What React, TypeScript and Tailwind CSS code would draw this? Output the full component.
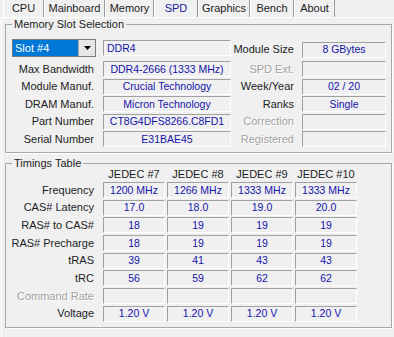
const tabs = [
  { name: 'CPU', w: 'w-[41px]' },
  { name: 'Mainboard', w: 'w-[61px]' },
  { name: 'Memory', w: 'w-[49px]' },
  { name: 'SPD', w: 'w-[44px]', active: true },
  { name: 'Graphics', w: 'w-[52px]' },
  { name: 'Bench', w: 'w-[44px]' },
  { name: 'About', w: 'w-[41px]' },
]

const slotRows = [
  { label: 'Max Bandwidth', value: 'DDR4-2666 (1333 MHz)', label2: 'SPD Ext.', value2: '', off: true },
  { label: 'Module Manuf.', value: 'Crucial Technology', label2: 'Week/Year', value2: '02 / 20' },
  { label: 'DRAM Manuf.', value: 'Micron Technology', label2: 'Ranks', value2: 'Single' },
  { label: 'Part Number', value: 'CT8G4DFS8266.C8FD1', label2: 'Correction', value2: '', off: true },
  { label: 'Serial Number', value: 'E31BAE45', label2: 'Registered', value2: '', off: true },
]

const timings = [
  { label: 'Frequency', vals: ['1200 MHz', '1266 MHz', '1333 MHz', '1333 MHz'] },
  { label: 'CAS# Latency', vals: ['17.0', '18.0', '19.0', '20.0'] },
  { label: 'RAS# to CAS#', vals: ['18', '19', '19', '19'] },
  { label: 'RAS# Precharge', vals: ['18', '19', '19', '19'] },
  { label: 'tRAS', vals: ['39', '41', '43', '43'] },
  { label: 'tRC', vals: ['56', '59', '62', '62'] },
  { label: 'Command Rate', vals: ['', '', '', ''], off: true },
  { label: 'Voltage', vals: ['1.20 V', '1.20 V', '1.20 V', '1.20 V'] },
]

function Field({ children, className }: { children?: React.ReactNode; className: string }) {
  return (
    <div className={`h-[16px] border border-t-[#a0a0a0] border-l-[#a0a0a0] border-r-white border-b-white flex items-center justify-center text-[10.5px] text-[#1414a8] whitespace-nowrap overflow-hidden ${className}`}>
      {children}
    </div>
  )
}

function Label({ text, off, className }: { text: string; off?: boolean; className: string }) {
  return (
    <div className={`text-right whitespace-nowrap ${off ? 'text-[#a2a2a2] [text-shadow:1px_1px_0_#fff]' : 'text-[#1c1c24]'} ${className}`}>
      {text}
    </div>
  )
}

export default function App() {
  return (
    <div className="w-[394px] h-[337px] bg-[#f0f0f0] overflow-hidden font-['Liberation_Sans',Arial,sans-serif] text-[11px] leading-[13px] pl-[1px]">
      {/* tab strip */}
      <div className="flex h-[17px] pl-[2px]">
        {tabs.map((t) => (
          <div
            key={t.name}
            className={`${t.w} h-full flex items-center justify-center border-l border-l-white ${
              t.active ? 'text-[#1a1a9a] border-r border-r-[#8a8a8a]' : 'text-[#1c1c24] border-r border-r-[#9a9a9a]'
            }`}
          >
            {t.name}
          </div>
        ))}
      </div>

      {/* tab page */}
      <div className="h-[320px] border-l border-t border-white pl-[3px]">
        <fieldset className="w-[387px] border border-[#a8a8a8] shadow-[1px_1px_0_#fff] pb-[5px]">
          <legend className="ml-[6px] px-[2px] leading-[13px] text-[#1c1c24]">Memory Slot Selection</legend>
          <div className="flex items-center pt-[8px] h-[18px] box-content">
            <div className="ml-[6px] w-[84px] h-[18px] border border-[#7a7a7a] flex bg-white">
              <div className="flex-1 bg-[#0078d7] text-white flex items-center pl-[2px]">Slot #4</div>
              <div className="w-[17px] bg-[#e6e6e6] border-l border-[#adadad] flex items-center justify-center">
                <svg width="7" height="4" viewBox="0 0 7 4">
                  <path d="M0 0h7L3.5 4z" fill="#000" />
                </svg>
              </div>
            </div>
            <Field className="w-[128px] ml-[7px] !justify-start pl-[3px]">DDR4</Field>
            <Label text="Module Size" className="w-[63px] mt-[3px]" />
            <Field className="w-[84px] ml-[8px] mt-[3px]">8 GBytes</Field>
          </div>
          <div className="flex flex-col gap-[1.5px] mt-[4px]">
            {slotRows.map((r) => (
              <div key={r.label} className="flex items-center h-[16px]">
                <Label text={r.label} className="w-[88px]" />
                <Field className="w-[128px] ml-[9px]">{r.value}</Field>
                <Label text={r.label2} off={r.off} className="w-[63px]" />
                <Field className="w-[84px] ml-[8px]">{r.value2}</Field>
              </div>
            ))}
          </div>
        </fieldset>

        <fieldset className="w-[387px] mt-[4.5px] border border-[#a8a8a8] shadow-[1px_1px_0_#fff] pb-[5px]">
          <legend className="ml-[6px] px-[2px] leading-[11px] text-[#1c1c24]">Timings Table</legend>
          <div className="flex h-[11px] items-center pl-[97px] gap-[2px] text-[#1c1c24]">
            {['JEDEC #7', 'JEDEC #8', 'JEDEC #9', 'JEDEC #10'].map((h) => (
              <div key={h} className="w-[62px] text-center whitespace-nowrap">{h}</div>
            ))}
          </div>
          <div className="flex flex-col gap-[1.7px] mt-[2.5px]">
            {timings.map((r) => (
              <div key={r.label} className="flex items-center h-[16px]">
                <Label text={r.label} off={r.off} className="w-[88px] mr-[9px]" />
                <div className="flex gap-[2px]">
                  {r.vals.map((v, i) => (
                    <Field key={i} className="w-[62px]">{v}</Field>
                  ))}
                </div>
              </div>
            ))}
          </div>
        </fieldset>
      </div>
    </div>
  )
}
